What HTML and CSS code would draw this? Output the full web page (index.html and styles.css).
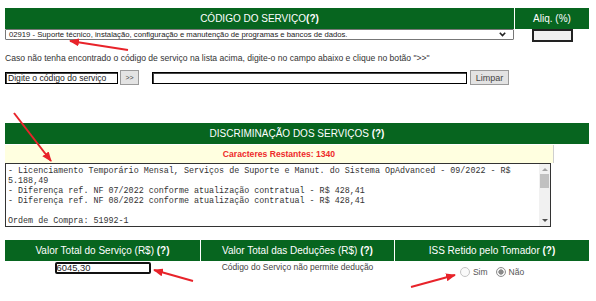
FILE: index.html
```html
<!DOCTYPE html>
<html>
<head>
<meta charset="utf-8">
<title>Dados do Serviço</title>
<link rel="stylesheet" href="styles.css">
</head>
<body>
<div class="page">

  <div class="bar">
    <div class="head main">CÓDIGO DO SERVIÇO<b>(?)</b></div>
    <div class="head aliq">Aliq. (%)</div>
  </div>
  <div class="bar">
    <div class="select">
      <span>02919 - Suporte técnico, instalação, configuração e manutenção de programas e bancos de dados.</span>
      <svg class="chev" width="7" height="5" viewBox="0 0 7 5"><path d="M0.8 0.8 L3.5 3.6 L6.2 0.8" fill="none" stroke="#222" stroke-width="1.6"/></svg>
    </div>
    <div class="aliq-cell"><div class="aliq-box"></div></div>
  </div>

  <p class="hint">Caso não tenha encontrado o código de serviço na lista acima, digite-o no campo abaixo e clique no botão "&gt;&gt;"</p>

  <div class="search">
    <div class="field code">Digite o código do serviço</div>
    <div class="btn go">&gt;&gt;</div>
    <div class="field desc"></div>
    <div class="btn clear">Limpar</div>
  </div>

  <div class="head wide">DISCRIMINAÇÃO DOS SERVIÇOS&nbsp;<b>(?)</b></div>
  <div class="counter">Caracteres Restantes: 1340</div>
  <div class="textarea">
    <div class="text">- Licenciamento Temporário Mensal, Serviços de Suporte e Manut. do Sistema OpAdvanced - 09/2022 - R$ 5.188,49
- Diferença ref. NF 07/2022 conforme atualização contratual - R$ 428,41
- Diferença ref. NF 08/2022 conforme atualização contratual - R$ 428,41

Ordem de Compra: 51992-1</div>
    <div class="scroll">
      <span class="arrow up"></span>
      <span class="thumb"></span>
      <span class="arrow down"></span>
    </div>
  </div>

  <div class="totals">
    <div class="head">Valor Total do Serviço (R$)&nbsp;<b>(?)</b></div>
    <div class="head">Valor Total das Deduções (R$)&nbsp;<b>(?)</b></div>
    <div class="head">ISS Retido pelo Tomador&nbsp;<b>(?)</b></div>
    <div class="cell"><div class="field value">6045,30</div></div>
    <div class="cell note">Código do Serviço não permite dedução</div>
    <div class="cell radios">
      <span class="radio"></span><span class="lbl">Sim</span>
      <span class="radio on"></span><span class="lbl">Não</span>
    </div>
  </div>

</div>

<svg class="marks" width="596" height="301" viewBox="0 0 596 301">
  <defs>
    <marker id="tip" markerWidth="5" markerHeight="4" refX="4.5" refY="2" orient="auto" markerUnits="strokeWidth">
      <path d="M0 0 L5 2 L0 4 Z" fill="#e8232a"/>
    </marker>
  </defs>
  <g stroke="#e8232a" stroke-width="2" fill="none" marker-end="url(#tip)">
    <line x1="128" y1="50" x2="70" y2="41"/>
    <line x1="14" y1="113" x2="51" y2="161"/>
    <line x1="193" y1="281" x2="154" y2="270"/>
    <line x1="411" y1="287" x2="455" y2="275"/>
  </g>
</svg>
</body>
</html>
```

FILE: styles.css
```css
body {
   margin: 0;
   background-color: white;
   font-family: "Liberation Sans", Arial, sans-serif;
   color: #222;
}

.page {
   width: 584px;
   padding: 8px 0 0 5px;
}

.head {
   background-color: #07651f;
   color: white;
   font-size: 10px;
   height: 21px;
   display: flex;
   align-items: center;
   justify-content: center;
   white-space: nowrap;
}

.bar {
   display: flex;
   gap: 1px;
}

.bar .main {
   width: 509px;
}

.bar .aliq {
   flex: 1;
}

.select {
   width: 509px;
   height: 11px;
   box-sizing: border-box;
   border: 1px solid #777;
   border-radius: 1px;
   font-size: 7.7px;
   display: flex;
   align-items: center;
   justify-content: space-between;
   padding: 0 7px 0 3px;
}

.chev {
   display: block;
}

.aliq-cell {
   flex: 1;
   display: flex;
   justify-content: center;
}

.aliq-box {
   width: 41px;
   height: 13px;
   box-sizing: border-box;
   border: 2px solid #222;
   background-color: #f0f0f0;
}

.hint {
   margin: 11px 0 0 0;
   font-size: 8.6px;
   line-height: 10px;
   color: #333;
}

.search {
   display: flex;
   align-items: center;
   margin-top: 7px;
   height: 15px;
}

.field {
   height: 12px;
   box-sizing: border-box;
   border: 1px solid #000;
   box-shadow: inset 1px 1px 0 #444;
   font-size: 8.6px;
   line-height: 10px;
   padding-left: 2px;
   color: #222;
   white-space: nowrap;
}

.code {
   width: 113px;
}

.desc {
   width: 315px;
   margin-left: 13px;
}

.btn {
   height: 15px;
   box-sizing: border-box;
   border: 1px solid #9a9a9a;
   background-color: #e3e3e3;
   color: #444;
   display: flex;
   align-items: center;
   justify-content: center;
}

.go {
   width: 19px;
   margin-left: 2px;
   font-size: 7px;
}

.clear {
   width: 39px;
   margin-left: 3px;
   font-size: 9px;
}

.wide {
   margin-top: 38px;
}

.counter {
   width: 549px;
   height: 18px;
   box-sizing: border-box;
   margin-top: 1px;
   background-color: #ffffe0;
   border-right: 1px solid #cfcfcf;
   color: #ee2a2a;
   font-size: 8.6px;
   font-weight: bold;
   display: flex;
   align-items: center;
   justify-content: center;
}

.textarea {
   width: 546px;
   height: 64px;
   box-sizing: border-box;
   border: 1px solid #333;
   display: flex;
}

.text {
   flex: 1;
   font-family: "Liberation Mono", "Courier New", monospace;
   font-size: 8.4px;
   line-height: 10px;
   white-space: pre-wrap;
   padding: 2px 0 0 2px;
   color: #333;
   overflow: hidden;
}

.scroll {
   width: 11px;
   background-color: #f1f1f1;
   display: flex;
   flex-direction: column;
   align-items: center;
}

.thumb {
   width: 9px;
   height: 14px;
   background-color: #c1c1c1;
   margin-top: 3px;
}

.arrow {
   width: 0;
   height: 0;
   border-left: 3px solid transparent;
   border-right: 3px solid transparent;
}

.arrow.up {
   margin-top: 4px;
   border-bottom: 3px solid #a3a3a3;
}

.arrow.down {
   margin-top: auto;
   margin-bottom: 4px;
   border-top: 3px solid #505050;
}

.totals {
   margin-top: 13px;
   display: grid;
   grid-template-columns: 195px 193px 1fr;
   column-gap: 1px;
}

.cell {
   display: flex;
   justify-content: center;
}

.value {
   width: 96px;
   margin-top: 1px;
   border: 2px solid #111;
   border-radius: 2px;
   box-shadow: none;
   font-size: 9.4px;
   line-height: 8px;
   padding-left: 0;
}

.note {
   font-size: 8.5px;
   line-height: 10px;
   color: #444;
   padding-top: 1px;
}

.radios {
   align-items: center;
   padding-top: 6px;
   font-size: 8.5px;
   color: #555;
}

.radio {
   width: 10px;
   height: 10px;
   box-sizing: border-box;
   border: 1px solid #c4c4c4;
   border-radius: 50%;
   background-color: #fafafa;
   margin-right: 3px;
}

.radio.on {
   border-color: #8f8f8f;
   background: radial-gradient(circle, #8a8a8a 0 2.4px, #f4f4f4 2.8px);
   margin-left: 8px;
}

.marks {
   position: absolute;
   left: 0;
   top: 0;
   pointer-events: none;
}
```
